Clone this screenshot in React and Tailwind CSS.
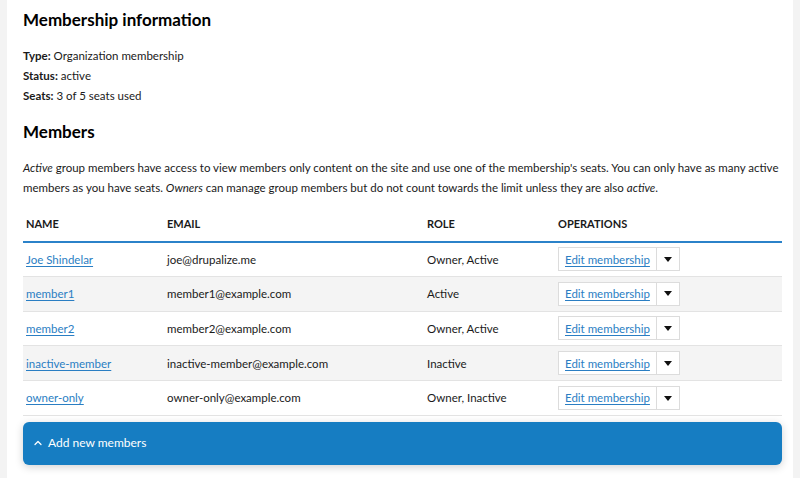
import { ChevronUp } from 'lucide-react';

const members = [
  { name: 'Joe Shindelar', email: 'joe@drupalize.me', role: 'Owner, Active' },
  { name: 'member1', email: 'member1@example.com', role: 'Active' },
  { name: 'member2', email: 'member2@example.com', role: 'Owner, Active' },
  { name: 'inactive-member', email: 'inactive-member@example.com', role: 'Inactive' },
  { name: 'owner-only', email: 'owner-only@example.com', role: 'Owner, Inactive' }
];

export default function App() {
  return (
    <div className="min-h-screen bg-[#f3f3f3] px-[7px] text-[#1a1a1a]" style={{ fontFamily: 'Lato, "Open Sans", sans-serif' }}>
      <div className="bg-white min-h-[478px] pl-4 pr-[11px] pt-[9px]">
        {/* Membership info */}
        <h2 className="text-[17px] font-bold leading-[22px] text-black">Membership information</h2>
        <div className="mt-[15px] text-[11.5px] leading-5">
          <div><strong>Type:</strong> Organization membership</div>
          <div><strong>Status:</strong> active</div>
          <div><strong>Seats:</strong> 3 of 5 seats used</div>
        </div>

        {/* Members */}
        <h2 className="mt-[15px] text-[17px] font-bold leading-[22px] text-black">Members</h2>
        <p className="mt-[15px] text-[11.5px] leading-5">
          <em>Active</em> group members have access to view members only content on the site and use one of the membership's seats. You can only have as many active members as you have seats. <em>Owners</em> can manage group members but do not count towards the limit unless they are also <em>active</em>.
        </p>

        <table className="mt-[18px] w-full text-[11.5px] border-collapse">
          <thead>
            <tr className="border-b-2 border-[#2b82c9] text-left">
              <th className="font-bold uppercase text-[11px] pl-[3px] pb-[8px] w-[144px]">Name</th>
              <th className="font-bold uppercase text-[11px] pb-[8px] w-[260px]">Email</th>
              <th className="font-bold uppercase text-[11px] pb-[8px] w-[131px]">Role</th>
              <th className="font-bold uppercase text-[11px] pb-[8px]">Operations</th>
            </tr>
          </thead>
          <tbody>
            {members.map((m, i) => (
              <tr key={m.name} className={`border-b border-[#e3e3e3] h-[34.8px] ${i % 2 ? 'bg-[#f4f4f4]' : 'bg-white'}`}>
                <td className="pl-[3px]">
                  <a href="#" className="text-[#2a7ec3] underline underline-offset-2">{m.name}</a>
                </td>
                <td>{m.email}</td>
                <td>{m.role}</td>
                <td>
                  <div className="inline-flex items-stretch h-[24px] border border-[#dcdcdc] bg-white align-middle">
                    <a href="#" className="flex items-center px-[6px] text-[#2a7ec3] underline underline-offset-2">Edit membership</a>
                    <span className="flex items-center justify-center w-[23px] border-l border-[#dcdcdc]">
                      <svg width="8" height="5" viewBox="0 0 8 5"><path d="M0 0h8L4 5z" fill="#111" /></svg>
                    </span>
                  </div>
                </td>
              </tr>
            ))}
          </tbody>
        </table>

        {/* Add new members */}
        <div className="mt-[6px] h-[43px] rounded-[6px] bg-[#167dc2] shadow-[0_2px_8px_rgba(0,0,0,0.18)] flex items-center pl-[9px] text-white text-[12px]">
          <ChevronUp size={12} strokeWidth={2.5} className="mr-[4px]" />
          Add new members
        </div>
      </div>
    </div>
  );
}
